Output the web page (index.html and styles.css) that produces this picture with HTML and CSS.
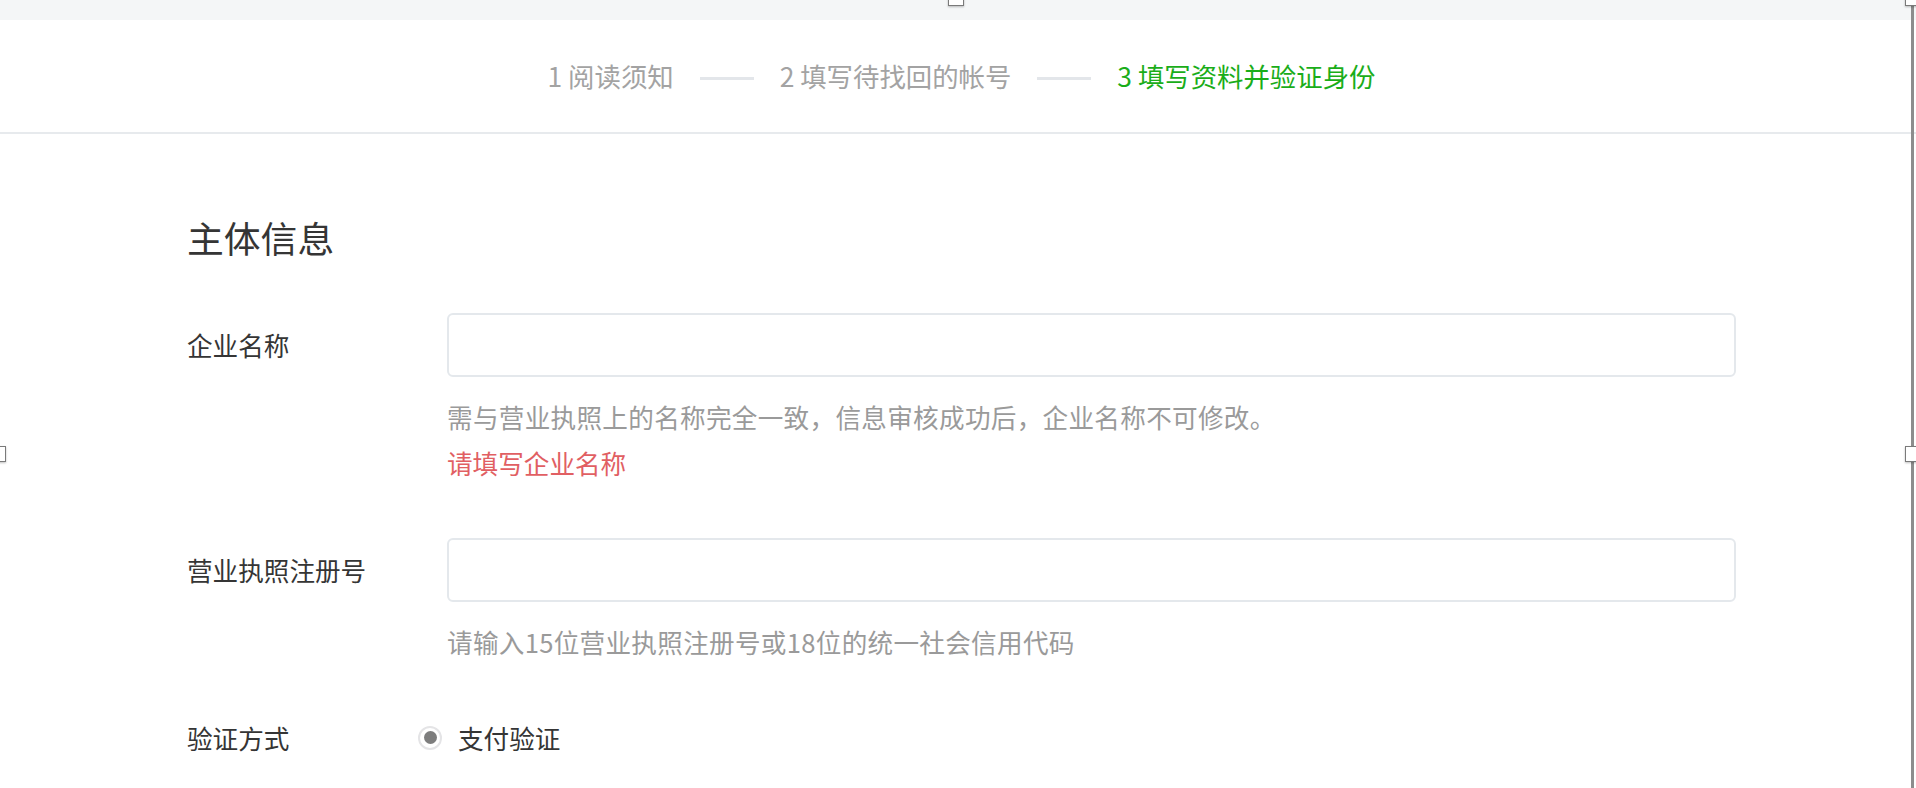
FILE: index.html
```html
<!DOCTYPE html>
<html lang="zh-CN">
<head>
    <meta charset="UTF-8">
    <meta name="viewport" content="width=device-width, initial-scale=1.0">
    <title>找回帐号</title>
    <link rel="stylesheet" href="styles.css">
</head>
<body>

<div class="topbar"></div>

<div class="steps">
    <span class="step">1 阅读须知</span>
    <span class="step-line"></span>
    <span class="step">2 填写待找回的帐号</span>
    <span class="step-line"></span>
    <span class="step active">3 填写资料并验证身份</span>
</div>

<div class="main">
    <h2 class="section-title">主体信息</h2>

    <div class="field">
        <div class="field-row">
            <label class="field-label" for="company">企业名称</label>
            <input class="field-input" type="text" id="company" name="company">
        </div>
        <div class="field-body">
            <p class="field-tips">需与营业执照上的名称完全一致，信息审核成功后，企业名称不可修改。</p>
            <p class="field-error">请填写企业名称</p>
        </div>
    </div>

    <div class="field">
        <div class="field-row">
            <label class="field-label" for="license">营业执照注册号</label>
            <input class="field-input" type="text" id="license" name="license">
        </div>
        <div class="field-body">
            <p class="field-tips">请输入15位营业执照注册号或18位的统一社会信用代码</p>
        </div>
    </div>

    <div class="field">
        <div class="field-row short">
            <span class="field-label">验证方式</span>
            <label class="radio-option">
                <span class="radio-icon"><span class="radio-dot"></span></span>
                支付验证
            </label>
        </div>
    </div>
</div>

<!-- selection frame of the design canvas -->
<div class="frame-line"></div>
<div class="handle handle-top"></div>
<div class="handle handle-top-right"></div>
<div class="handle handle-left"></div>
<div class="handle handle-right"></div>

</body>
</html>
```

FILE: styles.css
```css
body {
    font-family: "Noto Sans CJK SC", "Noto Sans", sans-serif;
    background-color: #ffffff;
    margin: 0;
    padding: 0;
    color: #353535;
    height: 788px;
    overflow: hidden;
}
.topbar {
    height: 20px;
    background-color: #f4f6f7;
}
.steps {
    height: 112px;
    border-bottom: 2px solid #e7eaed;
    display: flex;
    justify-content: center;
    align-items: center;
    gap: 26px;
    padding-left: 7px;
}
.step {
    font-size: 26.4px;
    line-height: 40px;
    color: #a3a3a3;
}
.step.active {
    color: #1aad19;
}
.step-line {
    width: 54px;
    height: 3px;
    background-color: #e3e6ea;
    margin-top: 4px;
}
.main {
    padding: 77px 0 0 187px;
}
.section-title {
    margin: 0 0 50px;
    font-size: 36.8px;
    line-height: 52px;
    font-weight: normal;
    color: #353535;
}
.field {
    margin-bottom: 55px;
}
.field-row {
    display: flex;
    align-items: center;
}
.field-label {
    width: 260px;
    flex-shrink: 0;
    font-size: 25.6px;
    line-height: 64px;
    color: #353535;
}
.field-row.short .field-label {
    line-height: 41px;
}
.field-input {
    box-sizing: border-box;
    width: 1289px;
    height: 64px;
    border: 2px solid #e4e8ec;
    border-radius: 6px;
    padding: 0 20px;
    font-size: 25.6px;
    font-family: inherit;
    outline: none;
}
.field-input:focus {
    border-color: #1aad19;
}
.field-body {
    padding-left: 260px;
}
.field-tips {
    margin: 19px 0 0;
    font-size: 25.6px;
    line-height: 41px;
    letter-spacing: 0.3px;
    color: #9a9a9a;
}
.field-error {
    margin: 5px 0 0;
    font-size: 25.6px;
    line-height: 41px;
    color: #e15f63;
}
.radio-option {
    display: flex;
    align-items: center;
    gap: 16px;
    margin-left: -29px;
    font-size: 25.6px;
    line-height: 41px;
    color: #353535;
    cursor: pointer;
}
.radio-icon {
    box-sizing: border-box;
    width: 24px;
    height: 24px;
    border: 2px solid #e4e4e6;
    border-radius: 50%;
    display: flex;
    justify-content: center;
    align-items: center;
}
.radio-dot {
    width: 13px;
    height: 13px;
    border-radius: 50%;
    background-color: #7d7d7d;
}
.frame-line {
    position: absolute;
    top: 0;
    left: 1911px;
    width: 3px;
    height: 788px;
    background-color: #8d8d8d;
}
.handle {
    position: absolute;
    box-sizing: border-box;
    width: 16px;
    height: 16px;
    background-color: #ffffff;
    border: 1.5px solid #7a7a7a;
    box-shadow: 0 1px 2px rgba(0, 0, 0, 0.25);
}
.handle-top {
    top: -10px;
    left: 948px;
}
.handle-top-right {
    top: -10px;
    left: 1905px;
}
.handle-left {
    top: 446px;
    left: -10px;
}
.handle-right {
    top: 446px;
    left: 1905px;
}
```
